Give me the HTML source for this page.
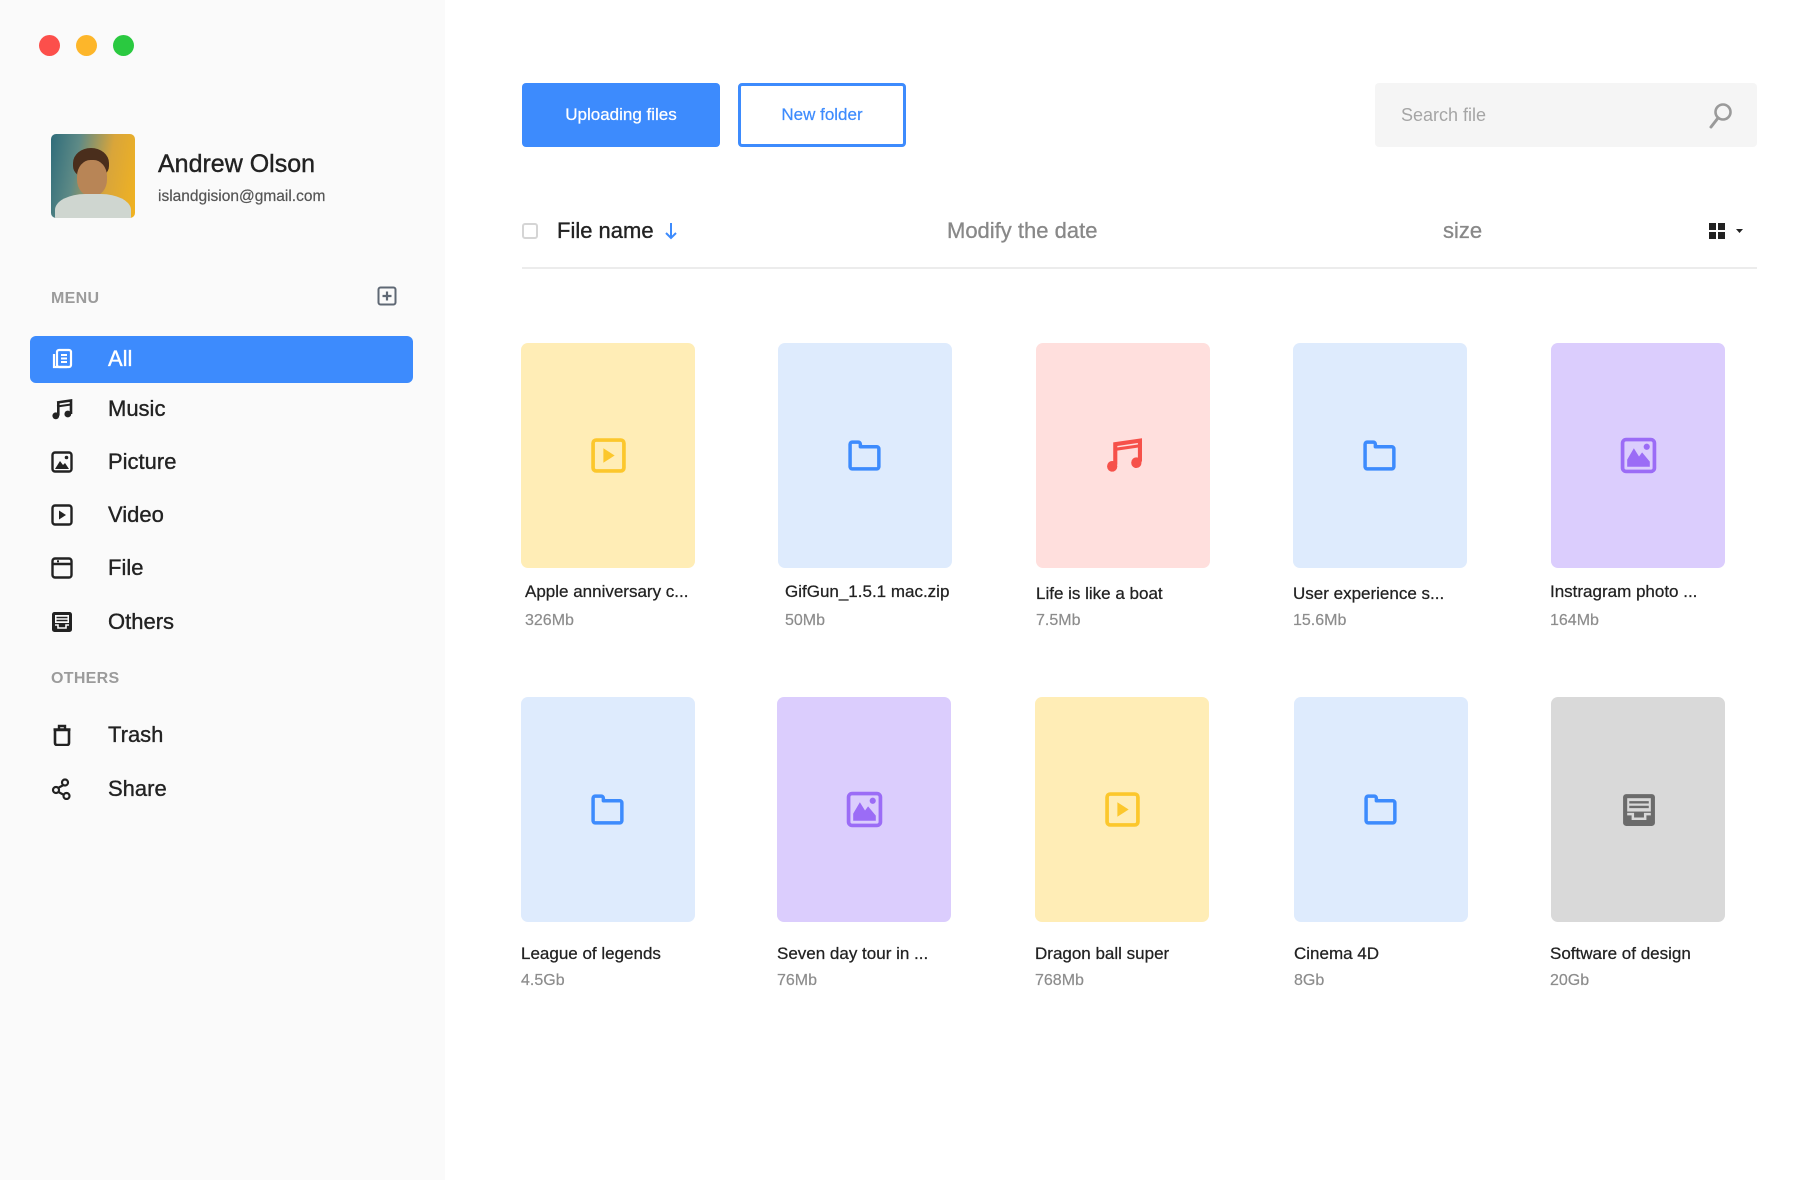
<!DOCTYPE html>
<html><head><meta charset="utf-8">
<style>
*{margin:0;padding:0;box-sizing:border-box}
html,body{width:1816px;height:1180px;overflow:hidden;background:#fff;font-family:"Liberation Sans",Arial,sans-serif;color:#222}
.abs{position:absolute}
#side{position:absolute;left:0;top:0;width:445px;height:1180px;background:#fafafa}
.dot{position:absolute;width:21px;height:21px;border-radius:50%;top:35px}
.item{position:absolute;left:51px;height:30px;display:flex;align-items:center;font-size:22px;-webkit-text-stroke:0.35px #222}
.item svg{width:22px;height:22px;margin-right:35px}
.lbl{position:absolute;left:51px;font-size:16px;font-weight:bold;color:#9b9b9b;letter-spacing:0.3px}
.card{position:absolute;width:174px;height:225px;border-radius:7px;display:flex;align-items:center;justify-content:center}
.card svg{width:37px;height:37px}
.t{position:absolute;font-size:17px;color:#222;-webkit-text-stroke:0.25px #222;white-space:nowrap}
.s{position:absolute;font-size:16px;color:#8c8c8c;-webkit-text-stroke:0.2px #8c8c8c}
</style></head><body>
<div id="side">
  <div class="dot" style="left:39px;background:#fc4f4b"></div>
  <div class="dot" style="left:76px;background:#fdb62a"></div>
  <div class="dot" style="left:113px;background:#2ac940"></div>
  <div class="abs" style="left:51px;top:134px;width:84px;height:84px;border-radius:5px;overflow:hidden;background:linear-gradient(100deg,#2f6c7a 0%,#5e8a86 30%,#d9a53a 65%,#f1b320 100%)">
    <div class="abs" style="left:22px;top:14px;width:36px;height:30px;border-radius:50% 50% 40% 40%;background:#4a2e1c"></div>
    <div class="abs" style="left:26px;top:26px;width:30px;height:36px;border-radius:45%;background:#b88556"></div>
    <div class="abs" style="left:4px;top:60px;width:76px;height:40px;border-radius:40% 40% 0 0;background:#cfd6d0"></div>
  </div>
  <div class="abs" style="left:158px;top:150px;font-size:25px;-webkit-text-stroke:0.4px #222">Andrew Olson</div>
  <div class="abs" style="left:158px;top:188px;font-size:15.5px;color:#555;-webkit-text-stroke:0.2px #555">islandgision@gmail.com</div>
  <div class="lbl" style="top:290px">MENU</div>
  <svg class="abs" style="left:377px;top:286px" width="20" height="20" viewBox="0 0 20 20"><rect x="1.5" y="1.5" width="17" height="17" rx="2" fill="none" stroke="#5f6874" stroke-width="2"/><path d="M10 5.5v9M5.5 10h9" stroke="#5f6874" stroke-width="2.2"/></svg>
  <div class="abs" style="left:30px;top:336px;width:383px;height:47px;border-radius:6px;background:#3d8bfd"></div>
  <div class="item" style="top:344px;color:#fff;-webkit-text-stroke:0.35px #fff">
    <svg viewBox="0 0 22 22"><path d="M3 6v13h13" fill="none" stroke="#fff" stroke-width="2.2"/><rect x="6" y="2" width="14" height="17" rx="2" fill="none" stroke="#fff" stroke-width="2.2"/><path d="M10 7h6M10 10.5h6M10 14h6" stroke="#fff" stroke-width="2"/></svg>All</div>
  <div class="item" style="top:394px"><svg viewBox="0 0 22 22"><path d="M6 4.5L20 2.5V16" fill="none" stroke="#222" stroke-width="2.6"/><path d="M7.3 4.3V17.5" stroke="#222" stroke-width="2.6"/><path d="M6 8.5L20 6.5" stroke="#222" stroke-width="2"/><circle cx="4.8" cy="17.8" r="3.4" fill="#222"/><circle cx="16.8" cy="16" r="3.4" fill="#222"/></svg>Music</div>
  <div class="item" style="top:447px"><svg viewBox="0 0 22 22"><rect x="1.5" y="1.5" width="19" height="19" rx="2.5" fill="none" stroke="#222" stroke-width="2.4"/><path d="M4 18l5-8 3 4 2-2 4 6z" fill="#222"/><circle cx="15.5" cy="6.5" r="1.8" fill="#222"/></svg>Picture</div>
  <div class="item" style="top:500px"><svg viewBox="0 0 22 22"><rect x="1.5" y="1.5" width="19" height="19" rx="2.5" fill="none" stroke="#222" stroke-width="2.4"/><path d="M8 6.5v9l7-4.5z" fill="#222"/></svg>Video</div>
  <div class="item" style="top:553px"><svg viewBox="0 0 22 22"><rect x="1.5" y="1.5" width="19" height="19" rx="2.5" fill="none" stroke="#222" stroke-width="2.4"/><path d="M1.5 7h19" stroke="#222" stroke-width="2.4"/><path d="M6 4.3h2" stroke="#222" stroke-width="2"/></svg>File</div>
  <div class="item" style="top:607px"><svg viewBox="0 0 22 22"><rect x="1" y="1" width="20" height="20" rx="2.5" fill="#222"/><rect x="4" y="4" width="14" height="8" fill="#fafafa"/><path d="M5.5 6.5h11M5.5 9.5h11" stroke="#222" stroke-width="1.6"/><path d="M4 14h3v3h8v-3h3" fill="none" stroke="#fafafa" stroke-width="1.6"/></svg>Others</div>
  <div class="lbl" style="top:670px">OTHERS</div>
  <div class="item" style="top:720px"><svg viewBox="0 0 22 22"><path d="M4 6h14v13a2 2 0 0 1-2 2H6a2 2 0 0 1-2-2z" fill="none" stroke="#222" stroke-width="2.6"/><path d="M2.5 5.5h17M8 5V2h6v3" fill="none" stroke="#222" stroke-width="2.4"/></svg>Trash</div>
  <div class="item" style="top:774px"><svg viewBox="0 0 22 22"><circle cx="14" cy="4.5" r="3" fill="none" stroke="#222" stroke-width="2.2"/><circle cx="5" cy="12" r="3" fill="none" stroke="#222" stroke-width="2.2"/><circle cx="15.5" cy="18" r="3" fill="none" stroke="#222" stroke-width="2.2"/><path d="M12.5 7L7 10M7.5 14l5.5 3" stroke="#222" stroke-width="2.2"/></svg>Share</div>
</div>

<div class="abs" style="left:522px;top:83px;width:198px;height:64px;border-radius:4px;background:#3d8bfd;color:#fff;font-size:17px;display:flex;align-items:center;justify-content:center;-webkit-text-stroke:0.25px #fff">Uploading files</div>
<div class="abs" style="left:738px;top:83px;width:168px;height:64px;border-radius:4px;border:3px solid #3d8bfd;color:#3d8bfd;font-size:17px;display:flex;align-items:center;justify-content:center;-webkit-text-stroke:0.2px #3d8bfd">New folder</div>
<div class="abs" style="left:1375px;top:83px;width:382px;height:64px;border-radius:4px;background:#f5f5f5"></div>
<div class="abs" style="left:1401px;top:105px;font-size:18px;color:#a5a5a5">Search file</div>
<svg class="abs" style="left:1708px;top:102px" width="26" height="28" viewBox="0 0 26 28"><circle cx="15" cy="10" r="7.5" fill="none" stroke="#9a9a9a" stroke-width="2.6"/><path d="M10 16L3 25" stroke="#9a9a9a" stroke-width="3" stroke-linecap="round"/></svg>

<div class="abs" style="left:522px;top:223px;width:16px;height:16px;border:2px solid #d5d5d5;border-radius:3px"></div>
<div class="abs" style="left:557px;top:218px;font-size:22px;color:#222;-webkit-text-stroke:0.35px #222">File name</div>
<svg class="abs" style="left:664px;top:221px" width="14" height="20" viewBox="0 0 14 20"><path d="M7 2v15M2 12l5 5 5-5" fill="none" stroke="#3d8bfd" stroke-width="2"/></svg>
<div class="abs" style="left:947px;top:218px;font-size:22px;color:#888;-webkit-text-stroke:0.3px #888">Modify the date</div>
<div class="abs" style="left:1443px;top:218px;font-size:22px;color:#888;-webkit-text-stroke:0.3px #888">size</div>
<svg class="abs" style="left:1709px;top:223px" width="36" height="16" viewBox="0 0 36 16"><rect x="0" y="0" width="7" height="7" fill="#222"/><rect x="9" y="0" width="7" height="7" fill="#222"/><rect x="0" y="9" width="7" height="7" fill="#222"/><rect x="9" y="9" width="7" height="7" fill="#222"/><path d="M27 6h7l-3.5 4z" fill="#222"/></svg>
<div class="abs" style="left:522px;top:267px;width:1235px;height:2px;background:#ececec"></div>

<!-- row 1 -->
<div class="card" style="left:521px;top:343px;background:#ffedb6"><svg viewBox="0 0 36 36"><rect x="3" y="3" width="30" height="30" rx="3" fill="none" stroke="#fcc72c" stroke-width="3.6"/><path d="M13 11v14l11-7z" fill="#fcc72c"/></svg></div>
<div class="card" style="left:778px;top:343px;background:#deebfd"><svg viewBox="0 0 36 36"><path d="M3 7a2 2 0 0 1 2-2h6a2 2 0 0 1 2 2v2.5h16a2 2 0 0 1 2 2V29a2 2 0 0 1-2 2H5a2 2 0 0 1-2-2z" fill="none" stroke="#3d8bfd" stroke-width="3.4" stroke-linejoin="round"/></svg></div>
<div class="card" style="left:1036px;top:343px;background:#ffdfdd"><svg viewBox="0 0 36 36"><path d="M10 27V7L34 3.5V24" fill="none" stroke="#f6514a" stroke-width="4"/><path d="M10 12L34 8.5" stroke="#f6514a" stroke-width="3"/><ellipse cx="7" cy="28.5" rx="5" ry="5.2" fill="#f6514a"/><ellipse cx="30.5" cy="25" rx="5" ry="5.2" fill="#f6514a"/></svg></div>
<div class="card" style="left:1293px;top:343px;background:#deebfd"><svg viewBox="0 0 36 36"><path d="M3 7a2 2 0 0 1 2-2h6a2 2 0 0 1 2 2v2.5h16a2 2 0 0 1 2 2V29a2 2 0 0 1-2 2H5a2 2 0 0 1-2-2z" fill="none" stroke="#3d8bfd" stroke-width="3.4" stroke-linejoin="round"/></svg></div>
<div class="card" style="left:1551px;top:343px;background:#dbcdfd"><svg viewBox="0 0 36 36"><rect x="2.5" y="2.5" width="31" height="31" rx="3.5" fill="none" stroke="#9b6cf6" stroke-width="3.6"/><path d="M7 29V22l6.5-11 5 8 3-4L29 24v5z" fill="#9b6cf6"/><circle cx="26" cy="9.5" r="3" fill="#9b6cf6"/></svg></div>

<div class="t" style="left:525px;top:582px">Apple anniversary c...</div><div class="s" style="left:525px;top:612px">326Mb</div>
<div class="t" style="left:785px;top:582px">GifGun_1.5.1 mac.zip</div><div class="s" style="left:785px;top:612px">50Mb</div>
<div class="t" style="left:1036px;top:584px">Life is like a boat</div><div class="s" style="left:1036px;top:612px">7.5Mb</div>
<div class="t" style="left:1293px;top:584px">User experience s...</div><div class="s" style="left:1293px;top:612px">15.6Mb</div>
<div class="t" style="left:1550px;top:582px">Instragram photo ...</div><div class="s" style="left:1550px;top:612px">164Mb</div>

<!-- row 2 -->
<div class="card" style="left:521px;top:697px;background:#deebfd"><svg viewBox="0 0 36 36"><path d="M3 7a2 2 0 0 1 2-2h6a2 2 0 0 1 2 2v2.5h16a2 2 0 0 1 2 2V29a2 2 0 0 1-2 2H5a2 2 0 0 1-2-2z" fill="none" stroke="#3d8bfd" stroke-width="3.4" stroke-linejoin="round"/></svg></div>
<div card="" class="card" style="left:777px;top:697px;background:#dbcdfd"><svg viewBox="0 0 36 36"><rect x="2.5" y="2.5" width="31" height="31" rx="3.5" fill="none" stroke="#9b6cf6" stroke-width="3.6"/><path d="M7 29V22l6.5-11 5 8 3-4L29 24v5z" fill="#9b6cf6"/><circle cx="26" cy="9.5" r="3" fill="#9b6cf6"/></svg></div>
<div class="card" style="left:1035px;top:697px;background:#ffedb6"><svg viewBox="0 0 36 36"><rect x="3" y="3" width="30" height="30" rx="3" fill="none" stroke="#fcc72c" stroke-width="3.6"/><path d="M13 11v14l11-7z" fill="#fcc72c"/></svg></div>
<div class="card" style="left:1294px;top:697px;background:#deebfd"><svg viewBox="0 0 36 36"><path d="M3 7a2 2 0 0 1 2-2h6a2 2 0 0 1 2 2v2.5h16a2 2 0 0 1 2 2V29a2 2 0 0 1-2 2H5a2 2 0 0 1-2-2z" fill="none" stroke="#3d8bfd" stroke-width="3.4" stroke-linejoin="round"/></svg></div>
<div class="card" style="left:1551px;top:697px;background:#d9d9d9"><svg viewBox="0 0 36 36"><rect x="3" y="3" width="31" height="31" rx="3" fill="#6b6b6b"/><rect x="7" y="7" width="23" height="13" fill="#d9d9d9"/><path d="M9 11h19M9 15.5h19" stroke="#6b6b6b" stroke-width="2.4"/><path d="M7 22.5h5.5v4.5h12v-4.5H30" fill="none" stroke="#d9d9d9" stroke-width="2.4"/></svg></div>

<div class="t" style="left:521px;top:944px">League of legends</div><div class="s" style="left:521px;top:972px">4.5Gb</div>
<div class="t" style="left:777px;top:944px">Seven day tour in ...</div><div class="s" style="left:777px;top:972px">76Mb</div>
<div class="t" style="left:1035px;top:944px">Dragon ball super</div><div class="s" style="left:1035px;top:972px">768Mb</div>
<div class="t" style="left:1294px;top:944px">Cinema 4D</div><div class="s" style="left:1294px;top:972px">8Gb</div>
<div class="t" style="left:1550px;top:944px">Software of design</div><div class="s" style="left:1550px;top:972px">20Gb</div>
</body></html>
